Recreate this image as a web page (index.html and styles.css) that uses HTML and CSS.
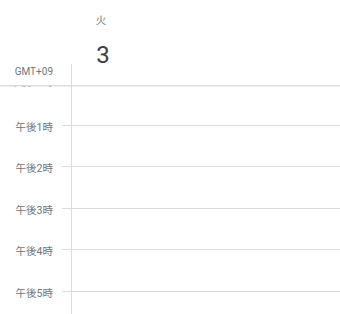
FILE: index.html
```html
<!DOCTYPE html>
<html lang="ja">
<head>
    <meta charset="UTF-8">
    <title>カレンダー</title>
    <link rel="stylesheet" href="styles.css">
</head>
<body>

<div class="header">
    <div class="gutter">
        <div class="tz">GMT+09</div>
    </div>
    <div class="day-head">
        <div class="day-top">
            <div class="weekday">火</div>
            <div class="date">3</div>
        </div>
        <div class="allday"></div>
    </div>
</div>

<div class="grid">
    <div class="times">
        <div class="slot first"><span class="label">午後12時</span></div>
        <div class="slot"><span class="label">午後1時</span></div>
        <div class="slot"><span class="label">午後2時</span></div>
        <div class="slot"><span class="label">午後3時</span></div>
        <div class="slot"><span class="label">午後4時</span></div>
        <div class="slot"><span class="label">午後5時</span></div>
        <div class="slot"></div>
    </div>
    <div class="ticks">
        <div class="tick"></div>
        <div class="tick"></div>
        <div class="tick"></div>
        <div class="tick"></div>
        <div class="tick"></div>
        <div class="tick"></div>
    </div>
    <div class="column">
        <div class="row"></div>
        <div class="row"></div>
        <div class="row"></div>
        <div class="row"></div>
        <div class="row"></div>
        <div class="row"></div>
    </div>
</div>

</body>
</html>
```

FILE: styles.css
```css
body {
    margin: 0;
    font-family: Roboto, "Noto Sans CJK JP", sans-serif;
    background: #fff;
    color: #70757a;
    overflow: hidden;
    height: 314px;
}
.header {
    display: flex;
    height: 85px;
    border-bottom: 1px solid #dadce0;
    box-shadow: 0 1px 1px rgba(0, 0, 0, 0.06);
    position: relative;
    z-index: 1;
    background: #fff;
}
.gutter {
    width: 53px;
    display: flex;
    flex-direction: column;
    justify-content: flex-end;
    align-items: flex-end;
    padding-right: 18px;
}
.tz {
    font-size: 10px;
    line-height: 12px;
    margin-bottom: 7px;
}
.day-head {
    flex: 1;
    display: flex;
    flex-direction: column;
}
.day-top {
    height: 64px;
    padding-left: 15px;
}
.weekday {
    width: 30px;
    text-align: center;
    font-size: 10.5px;
    line-height: 12px;
    padding-top: 15px;
}
.date {
    width: 30px;
    text-align: center;
    font-size: 24px;
    line-height: 28px;
    margin-top: 14px;
    margin-left: 2px;
    color: #3c4043;
}
.allday {
    flex: 1;
    border-left: 1px solid #dadce0;
}
.grid {
    display: flex;
    margin-top: -2px;
}
.times {
    width: 62px;
}
.slot {
    height: 41.5px;
    position: relative;
}
.slot.first {
    height: 0;
}
.label {
    position: absolute;
    right: 9px;
    bottom: -8px;
    font-size: 10.5px;
    line-height: 12px;
    white-space: nowrap;
}
.first .label {
    bottom: -5px;
    color: #b0b4b8;
}
.ticks {
    width: 9px;
}
.tick {
    height: 41.5px;
    border-bottom: 1px solid #dadce0;
    box-sizing: border-box;
}
.column {
    flex: 1;
    border-left: 1px solid #dadce0;
}
.row {
    height: 41.5px;
    border-bottom: 1px solid #dadce0;
    box-sizing: border-box;
}
```
